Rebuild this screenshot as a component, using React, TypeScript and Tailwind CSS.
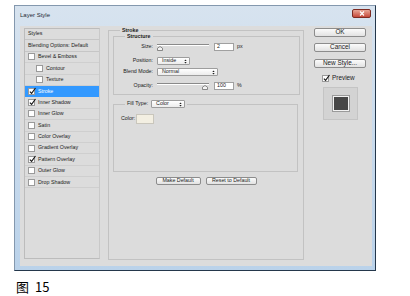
import React from "react";

interface StyleRow {
	label: string;
	checked?: boolean;
	indent?: boolean;
	active?: boolean;
}

const styleRows: StyleRow[] = [
	{ label: "Bevel & Emboss" },
	{ label: "Contour", indent: true },
	{ label: "Texture", indent: true },
	{ label: "Stroke", checked: true, active: true },
	{ label: "Inner Shadow", checked: true },
	{ label: "Inner Glow" },
	{ label: "Satin" },
	{ label: "Color Overlay" },
	{ label: "Gradient Overlay" },
	{ label: "Pattern Overlay", checked: true },
	{ label: "Outer Glow" },
	{ label: "Drop Shadow" },
];

const Check = ({ checked }: { checked?: boolean }) => (
	<div className="relative w-[7px] h-[7px] shrink-0 bg-white border border-[#9a9a9a]">
		{checked && (
			<svg viewBox="0 0 8 8" className="absolute left-0 top-[-2px] w-[7px] h-[8px]">
				<path d="M1 4.6 L3 6.8 L7.4 0.6" stroke="#161616" strokeWidth="1.3" fill="none" />
			</svg>
		)}
	</div>
);

const Btn = ({ label, className }: { label: string; className: string }) => (
	<div
		className={`${className} flex items-center justify-center border border-[#8c8c8c] rounded-[2px] bg-gradient-to-b from-[#fbfbfb] to-[#e2e2e2] text-[#1b1b1b] leading-none`}
	>
		{label}
	</div>
);

const Select = ({ label, w }: { label: string; w: string }) => (
	<div
		className={`${w} h-[8px] flex items-center justify-between pl-[4px] pr-[2px] bg-gradient-to-b from-white to-[#ececec] border border-[#9d9d9d] rounded-[1px] leading-none`}
	>
		<span>{label}</span>
		<svg viewBox="0 0 4 6" className="w-[3px] h-[5px]">
			<path d="M0.4 2.4 L2 0.4 L3.6 2.4 Z M0.4 3.6 L2 5.6 L3.6 3.6 Z" fill="#222" />
		</svg>
	</div>
);

const Slider = ({ thumbRight }: { thumbRight?: boolean }) => (
	<div className="relative w-[52px] h-[8px]">
		<div className="absolute left-0 right-0 top-[1px] h-[2px] border-t border-t-[#8a8a8a] border-b border-b-white bg-[#b4b4b4]" />
		<svg
			viewBox="0 0 6 5"
			className={`absolute top-[3px] w-[6px] h-[5px] ${thumbRight ? "right-[1px]" : "left-0"}`}
		>
			<path d="M0.5 4.5 V2.2 L3 0.5 L5.5 2.2 V4.5 Z" fill="#f4f4f4" stroke="#6f6f6f" strokeWidth="0.8" />
		</svg>
	</div>
);

const NumInput = ({ value }: { value: string }) => (
	<div className="w-[20px] h-[8px] flex items-center pl-[2px] bg-white border border-[#a0a0a0] leading-none">
		{value}
	</div>
);

const Label = ({ text }: { text: string }) => (
	<span className="w-[39px] text-right leading-none">{text}</span>
);

export default function App() {
	return (
		<div className="min-h-screen bg-white pl-[14px] pt-[5px] font-['Liberation_Sans',Arial,sans-serif] text-[#1b1b1b]">
			<div className="w-[362px] h-[266px] flex flex-col border border-t-[#8498ae] border-l-[#8498ae] border-r-[#24374b] border-b-[#24374b] bg-gradient-to-b from-[#d7e3ef] to-[#bad2ea] pl-[5px] pr-[3px] pb-[4px]">
				{/* title bar */}
				<div className="h-[20px] flex items-start justify-between">
					<span className="text-[6px] leading-[19px] text-[#1e2a36]">Layer Style</span>
					<div className="mt-[3px] mr-[1px] w-[19px] h-[9px] flex items-center justify-center rounded-[2px] border border-[#7d2b22] bg-gradient-to-b from-[#e8a596] to-[#c4473a]">
						<svg viewBox="0 0 6 5" className="w-[6px] h-[5px]">
							<path d="M1 0.5 L5 4.5 M5 0.5 L1 4.5" stroke="white" strokeWidth="1.2" />
						</svg>
					</div>
				</div>

				<div className="flex-1 flex bg-[#dcdcdc] text-[5.3px]">
					{/* styles list */}
					<div className="ml-[4px] mt-[2px] w-[76px] h-[231px] flex flex-col border border-[#bcbcbc] border-r-[#c9c9c9]">
						<div className="h-[11.4px] shrink-0 flex items-center pl-[3px] border-b border-[#c6c6c6]">Styles</div>
						<div className="h-[11.4px] shrink-0 flex items-center pl-[3px] border-b border-[#c6c6c6]">
							Blending Options: Default
						</div>
						{styleRows.map((row) => (
							<div
								key={row.label}
								className={`h-[11.4px] shrink-0 flex items-center gap-[3px] border-b ${
									row.indent ? "pl-[11px]" : "pl-[3px]"
								} ${row.active ? "bg-[#3399ff] text-white border-[#3399ff]" : "border-[#cfcfcf]"}`}
							>
								<Check checked={row.checked} />
								<span className="leading-none">{row.label}</span>
							</div>
						))}
					</div>

					{/* stroke settings */}
					<fieldset className="ml-[8px] mt-[1px] w-[196px] h-[233px] border border-[#c2c2c2] flex flex-col">
						<legend className="ml-[11px] px-[2px] font-bold leading-[6px]">Stroke</legend>

						<fieldset className="ml-[4px] mr-[3px] border border-[#c2c2c2] pb-[4px]">
							<legend className="ml-[11px] px-[2px] font-bold leading-[6px]">Structure</legend>

							<div className="mt-[3px] h-[10px] flex items-center gap-[4px]">
								<Label text="Size:" />
								<Slider />
								<div className="ml-[1px] flex items-center gap-[3px]">
									<NumInput value="2" />
									<span className="leading-none">px</span>
								</div>
							</div>

							<div className="mt-[5px] h-[8px] flex items-center gap-[4px]">
								<Label text="Position:" />
								<Select label="Inside" w="w-[33px]" />
							</div>

							<div className="mt-[3px] h-[8px] flex items-center gap-[4px]">
								<Label text="Blend Mode:" />
								<Select label="Normal" w="w-[61px]" />
							</div>

							<div className="mt-[6px] h-[8px] flex items-center gap-[4px]">
								<Label text="Opacity:" />
								<Slider thumbRight />
								<div className="ml-[1px] flex items-center gap-[3px]">
									<NumInput value="100" />
									<span className="leading-none">%</span>
								</div>
							</div>
						</fieldset>

						<fieldset className="mt-[5px] ml-[4px] mr-[5px] h-[72px] border border-[#c2c2c2]">
							<legend className="ml-[11px] px-[2px]">
								<div className="flex items-center gap-[3px]">
									<span className="leading-none">Fill Type:</span>
									<Select label="Color" w="w-[34px]" />
								</div>
							</legend>
							<div className="mt-[6px] pl-[7px] flex items-center">
								<span className="w-[15px] leading-none">Color:</span>
								<div className="w-[18px] h-[10px] bg-[#f3efe2] border border-[#c9c6bc]" />
							</div>
						</fieldset>

						<div className="mt-[5px] flex justify-center gap-[5px]">
							<Btn label="Make Default" className="w-[45px] h-[8px]" />
							<Btn label="Reset to Default" className="w-[51px] h-[8px]" />
						</div>
					</fieldset>

					{/* buttons */}
					<div className="w-[68px] pl-[10px] pt-[2px] flex flex-col text-[6.4px]">
						<Btn label="OK" className="w-[52px] h-[9px]" />
						<Btn label="Cancel" className="mt-[6px] w-[52px] h-[9px]" />
						<Btn label="New Style..." className="mt-[7px] w-[52px] h-[9px]" />
						<div className="mt-[7px] pl-[8px] flex items-center gap-[3px]">
							<Check checked />
							<span className="leading-none">Preview</span>
						</div>
						<div className="mt-[5px] ml-[9px] w-[35px] h-[33px] flex items-center justify-center bg-[#d3d3d3] border border-[#c4c4c4]">
							<div className="w-[16px] h-[15px] bg-[#474747] border border-[#f2f2f2] outline outline-1 outline-[#9a9a9a]" />
						</div>
					</div>
				</div>
			</div>

			<div className="mt-[10px] ml-[2px] flex items-center gap-[6px] text-[13px] leading-[12px] text-black font-['Noto_Sans_CJK_SC','Noto_Sans',sans-serif]">
				<span>图</span>
				<span>15</span>
			</div>
		</div>
	);
}
